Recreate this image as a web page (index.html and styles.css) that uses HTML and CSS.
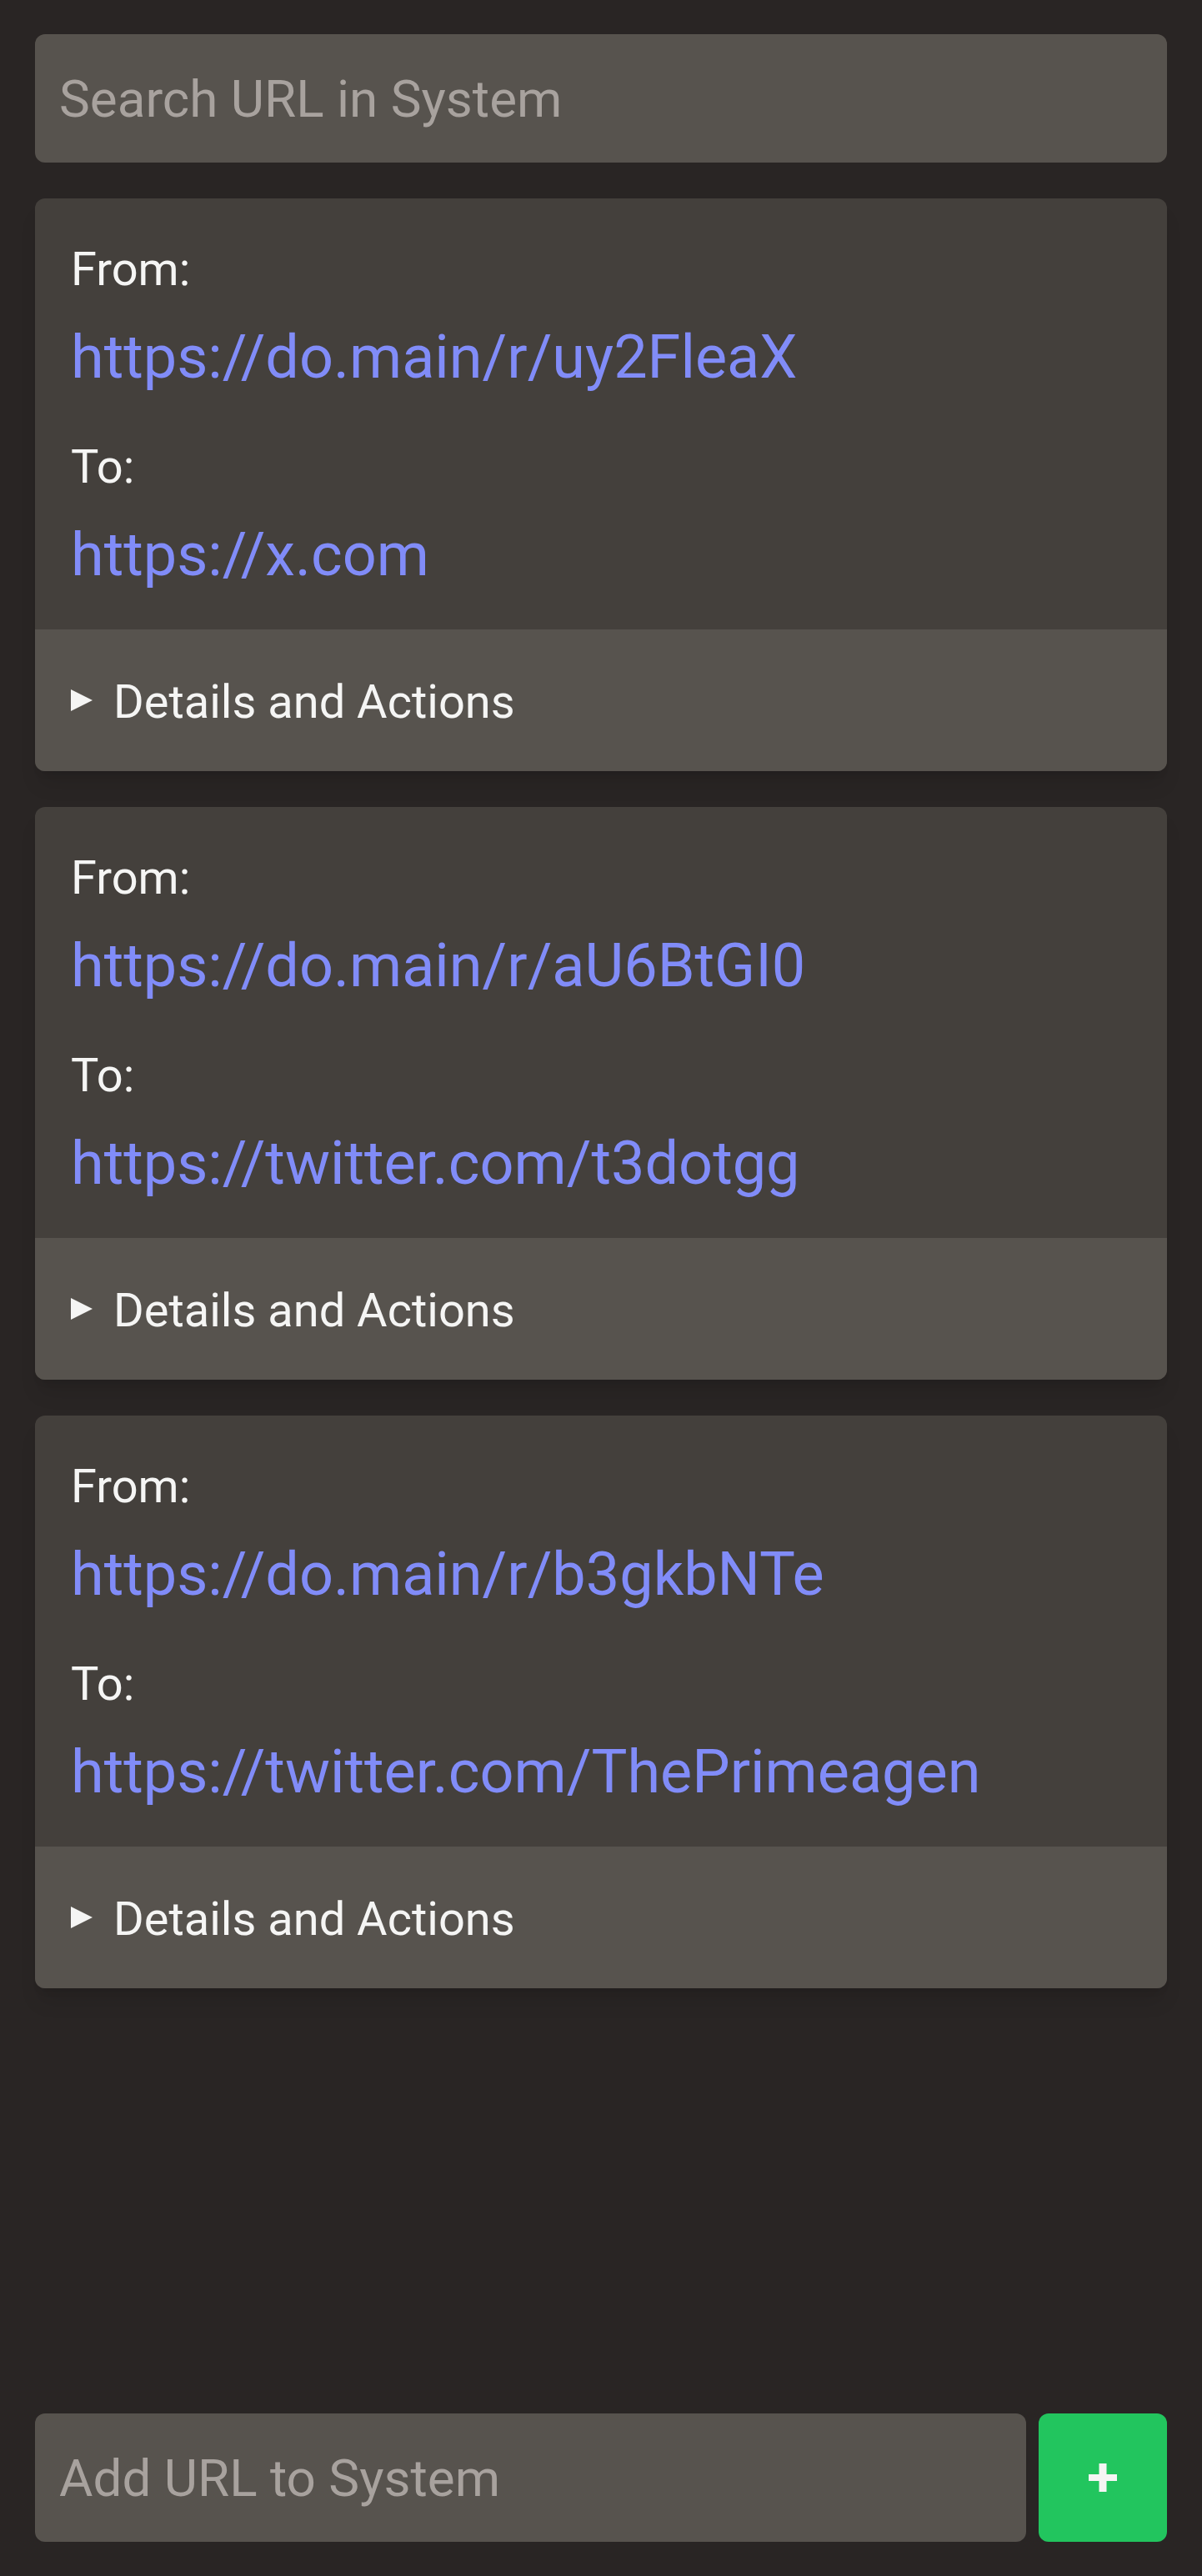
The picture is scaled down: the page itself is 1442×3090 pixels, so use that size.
FILE: index.html
```html
<!DOCTYPE html>
<html lang="en">
<head>
<meta charset="utf-8">
<title>URL System</title>
<link rel="stylesheet" href="styles.css">
</head>
<body>
<main class="page">
  <input class="search" type="text" placeholder="Search URL in System">
  <section class="list">
    <article class="card">
      <div class="card-body">
        <div class="field">
          <div class="label">From:</div>
          <a class="url" href="#">https://do.main/r/uy2FleaX</a>
        </div>
        <div class="field">
          <div class="label">To:</div>
          <a class="url" href="#">https://x.com</a>
        </div>
      </div>
      <details class="actions"><summary>Details and Actions</summary></details>
    </article>
    <article class="card">
      <div class="card-body">
        <div class="field">
          <div class="label">From:</div>
          <a class="url" href="#">https://do.main/r/aU6BtGI0</a>
        </div>
        <div class="field">
          <div class="label">To:</div>
          <a class="url" href="#">https://twitter.com/t3dotgg</a>
        </div>
      </div>
      <details class="actions"><summary>Details and Actions</summary></details>
    </article>
    <article class="card">
      <div class="card-body">
        <div class="field">
          <div class="label">From:</div>
          <a class="url" href="#">https://do.main/r/b3gkbNTe</a>
        </div>
        <div class="field">
          <div class="label">To:</div>
          <a class="url" href="#">https://twitter.com/ThePrimeagen</a>
        </div>
      </div>
      <details class="actions"><summary>Details and Actions</summary></details>
    </article>
  </section>
  <form class="add-bar">
    <input class="add-input" type="text" placeholder="Add URL to System">
    <button class="add-btn" type="button" aria-label="Add">
      <svg width="34" height="34" viewBox="0 0 34 34"><rect x="12.5" y="0" width="9" height="34" fill="#f5f5f4"/><rect x="0" y="13" width="34" height="8" fill="#f5f5f4"/></svg>
    </button>
  </form>
</main>
</body>
</html>
```
FILE: styles.css
```css
* { box-sizing: border-box; }
html, body { margin: 0; padding: 0; }
body {
  background: #292524;
  color: #f5f5f4;
  font-family: Roboto, "Open Sans", sans-serif;
}
.page {
  min-height: 100vh;
  display: flex;
  flex-direction: column;
  padding: 41px 42px 41px 42px;
}
.search, .add-input {
  display: block;
  width: 100%;
  height: 154px;
  border: none;
  outline: none;
  border-radius: 12px;
  background: #57534e;
  color: #f5f5f4;
  font-family: inherit;
  font-size: 62px;
  padding: 0 29px;
}
.search::placeholder, .add-input::placeholder { color: #a8a29e; }
.list {
  display: flex;
  flex-direction: column;
  gap: 43px;
  margin-top: 43px;
}
.card {
  border-radius: 12px;
  overflow: hidden;
  background: #44403c;
  box-shadow: 0 20px 25px -5px rgba(0,0,0,0.1), 0 8px 10px -6px rgba(0,0,0,0.1);
}
.card-body {
  padding: 43px 43px 37px;
  display: flex;
  flex-direction: column;
  gap: 37px;
}
.field { display: flex; flex-direction: column; gap: 11px; }
.label {
  font-size: 56px;
  line-height: 84px;
}
.url {
  color: #818cf8;
  text-decoration: none;
  font-size: 72px;
  line-height: 105px;
}
.actions { background: #57534e; }
.actions summary {
  list-style: none;
  display: flex;
  align-items: center;
  gap: 25px;
  padding: 45px 43px 41px;
  font-size: 56px;
  line-height: 84px;
  cursor: pointer;
}
.actions summary::-webkit-details-marker { display: none; }
.actions summary::before {
  content: "";
  width: 0;
  height: 0;
  border-left: 26px solid #f5f5f4;
  border-top: 13px solid transparent;
  border-bottom: 13px solid transparent;
  margin-top: -4px;
}
.add-bar {
  margin-top: auto;
  display: flex;
  gap: 15px;
}
.add-input { flex: 1; width: auto; }
.add-btn {
  width: 154px;
  height: 154px;
  flex: none;
  border: none;
  border-radius: 12px;
  background: #22c55e;
  display: flex;
  align-items: center;
  justify-content: center;
  padding: 0;
  cursor: pointer;
}
.add-btn svg { display: block; }
```
